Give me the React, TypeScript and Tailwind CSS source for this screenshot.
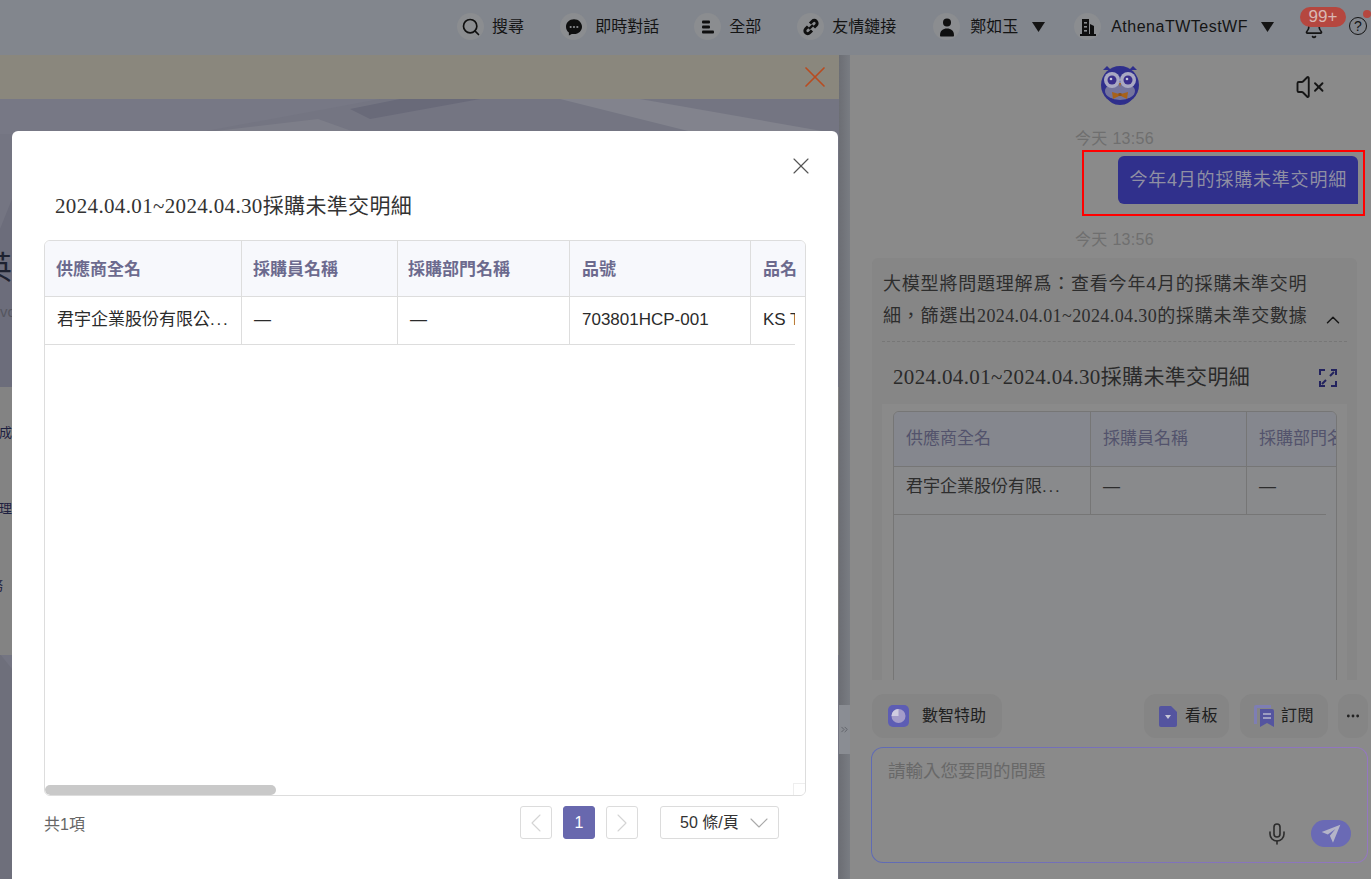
import React from "react";
import { Search, X, ChevronUp, ChevronDown, ChevronLeft, ChevronRight, ChevronsRight, VolumeX, Mic, Bell, Ellipsis } from "lucide-react";

const cjk = "font-['Liberation_Sans','Noto_Sans_CJK_TC',sans-serif]";
const serif = "font-['Liberation_Serif','Noto_Sans_CJK_TC',serif]";

function Circle({ children }: { children: React.ReactNode }) {
  return <span className="flex h-[27px] w-[27px] items-center justify-center rounded-full bg-[#8b8d90] text-[#0f0f0f]">{children}</span>;
}

function NavItem({ icon, label, gap = "gap-[8px]", cls = "" }: { icon: React.ReactNode; label: string; gap?: string; cls?: string }) {
  return (
    <div className={`flex items-center ${gap} ${cls}`}>
      <Circle>{icon}</Circle>
      <span className="text-[16px] leading-none text-[#141414]">{label}</span>
    </div>
  );
}

function Caret() {
  return (
    <svg width="13" height="10" viewBox="0 0 13 10"><path d="M0 0h13L6.5 10Z" fill="#141414" /></svg>
  );
}

function Owl() {
  return (
    <svg width="42" height="42" viewBox="0 0 42 42">
      <path d="M4 6 L8 2 L12 6 Z M38 6 L34 2 L30 6 Z" fill="#2f2f8c" />
      <circle cx="21" cy="21" r="19" fill="#2f2f8c" />
      <ellipse cx="21" cy="27" rx="15" ry="9" fill="#74749c" />
      <path d="M9 33 Q21 42 33 33 Q31 41 21 41 Q11 41 9 33Z" fill="#2f2f8c" />
      <circle cx="13" cy="16" r="8" fill="#a9a9c2" />
      <circle cx="29" cy="16" r="8" fill="#a9a9c2" />
      <circle cx="13" cy="16" r="4.5" fill="#3a2f8c" />
      <circle cx="29" cy="16" r="4.5" fill="#3a2f8c" />
      <circle cx="12" cy="15" r="1.3" fill="#c7c7dd" />
      <circle cx="28" cy="15" r="1.3" fill="#c7c7dd" />
      <path d="M20 19 L22 19 L21 23 Z" fill="#a8661c" />
      <path d="M13 28 L20 30 L20 32 L14 35 Z M29 28 L22 30 L22 32 L28 35 Z" fill="#a8621a" />
      <rect x="19.5" y="29" width="3" height="3" fill="#8f5216" />
    </svg>
  );
}

function Cell({ w, head, children, last, pad = "pl-[12px]", shift = "" }: { w: string; head?: boolean; children: React.ReactNode; last?: boolean; pad?: string; shift?: string }) {
  return (
    <div className={`${w} ${pad} ${shift} flex shrink-0 items-center overflow-hidden whitespace-nowrap ${last ? "" : "border-r"} ${head ? "font-bold" : ""} border-inherit`}>
      {children}
    </div>
  );
}

function Pager({ children, active }: { children: React.ReactNode; active?: boolean }) {
  return (
    <div className={`flex h-[33px] w-[32px] items-center justify-center overflow-hidden rounded-[3px] border text-[16px] ${active ? "border-[#6868ae] bg-[#6868ae] text-white" : "border-[#dcdcdc] text-[#d4d4d4]"}`}>
      {children}
    </div>
  );
}

function DotsIcon() {
  return (
    <svg width="20" height="20" viewBox="0 0 18 18"><path d="M9 2C4.8 2 1.8 5 1.8 8.8c0 2.2 1 4 2.6 5.2v2.6l2.6-1.4c.6.2 1.3.2 2 .2 4.2 0 7.2-3 7.2-6.6S13.2 2 9 2Z" fill="#0f0f0f" /><circle cx="6" cy="9" r="1" fill="#8b8d90" /><circle cx="9" cy="9" r="1" fill="#8b8d90" /><circle cx="12" cy="9" r="1" fill="#8b8d90" /></svg>
  );
}
function BarsIcon() {
  return (
    <svg width="18" height="18" viewBox="0 0 18 18" fill="#0f0f0f"><rect x="3" y="2.5" width="8" height="3" rx="1" /><rect x="3" y="7.5" width="8" height="3" rx="1" /><rect x="3" y="12.5" width="12" height="3" rx="1" /></svg>
  );
}
function LinkIcon() {
  return (
    <svg width="18" height="18" viewBox="0 0 18 18" fill="none" stroke="#0f0f0f" strokeWidth="3"><path d="M8 5.5 10.3 3.2a2.8 2.8 0 0 1 4 4L12 9.5" /><path d="M10 12.5 7.7 14.8a2.8 2.8 0 0 1-4-4L6 8.5" /><path d="M7 11l4-4" strokeWidth="2.4" /></svg>
  );
}
function UserIcon() {
  return (
    <svg width="18" height="20" viewBox="0 0 18 20" fill="#0f0f0f"><circle cx="9" cy="5.5" r="4" /><path d="M2 18.5c0-5 3-7 7-7s7 2 7 7c0 .5-.4 1-1 1H3c-.6 0-1-.5-1-1Z" /></svg>
  );
}
function BuildingIcon() {
  return (
    <svg width="18" height="20" viewBox="0 0 18 20" fill="#0f0f0f"><path d="M3 2h7v16H3zM11 7l4 2v9h-4z" /><rect x="1" y="17" width="16" height="2" /><rect x="5" y="5" width="3" height="1.6" fill="#8b8d90" /><rect x="5" y="9" width="3" height="1.6" fill="#8b8d90" /><rect x="5" y="13" width="3" height="1.6" fill="#8b8d90" /></svg>
  );
}

function Hero() {
  return (
    <svg className="absolute inset-0 h-full w-full" viewBox="0 0 839 780" preserveAspectRatio="none">
      <rect width="839" height="780" fill="#747582" />
      <polygon points="0,0 380,0 190,35 0,35" fill="#777885" />
      <polygon points="190,35 318,20 360,35" fill="#7d7e89" />
      <polygon points="350,10 400,0 480,0 370,20" fill="#696a79" />
      <polygon points="560,0 640,0 839,35 700,35" fill="#82838d" />
      <polygon points="0,130 12,100 12,288 0,288" fill="#6c6d7b" />
      <polygon points="0,555 12,570 12,780 0,780" fill="#6e6f7b" />
    </svg>
  );
}

export default function App() {
  return (
    <div className={`relative flex h-[879px] w-[1371px] flex-col overflow-hidden bg-[#82868d] ${cjk}`}>
      <header className="flex h-[55px] shrink-0 items-center justify-end gap-[35px] bg-[#82868d] pb-[2px] pr-[4px]">
        <NavItem cls="mr-[1px]" icon={<Search size={20} strokeWidth={2} />} label="搜尋" />
        <NavItem icon={<DotsIcon />} label="即時對話" />
        <NavItem cls="mr-[1px]" icon={<BarsIcon />} label="全部" />
        <NavItem icon={<LinkIcon />} label="友情鏈接" />
        <div className="ml-[2px] flex items-center gap-[14px]">
          <NavItem icon={<UserIcon />} label="鄭如玉" gap="gap-[10px]" />
          <Caret />
        </div>
        <div className="ml-[-6px] flex items-center gap-[13px]">
          <div className="flex items-center gap-[10px]">
            <Circle><BuildingIcon /></Circle>
            <span className="text-[16px] leading-none tracking-[0.5px] text-[#141414]">AthenaTWTestWF</span>
          </div>
          <Caret />
        </div>
        <div className="relative ml-[-5px] flex items-center gap-[25px]">
          <Bell size={20} className="mt-[4px] text-[#141414]" />
          <span className="mt-[-2px] flex h-[18px] w-[18px] items-center justify-center rounded-full border border-[#141414] text-[14px] leading-none text-[#141414]">?</span>
          <span className="absolute left-[-4px] top-[-8px] flex h-[20px] w-[46px] items-center justify-center rounded-[10px] bg-[#b5473f] text-[17px] leading-none text-[#d9b7b3]">99+</span>
          <span className="absolute right-[-4px] top-[-5px] h-[8px] w-[8px] rounded-full bg-[#b5473f]" />
        </div>
      </header>

      <main className="flex min-h-0 flex-1">
        <section className="relative flex w-[839px] shrink-0 flex-col overflow-hidden">
          <div className="relative flex h-[44px] shrink-0 items-center justify-end bg-[#8a877d] pr-[6px]">
            <X size={36} strokeWidth={1.1} className="text-[#b84c20]" />
          </div>
          <div className="relative min-h-0 flex-1">
            <Hero />
            <div className="relative flex h-full flex-col">
              <div className="h-[288px] shrink-0 pt-[150px]">
                <div className="ml-[-20px] text-[32px] leading-[38px] text-[#1e2230]">英</div>
                <div className="mt-[17px] text-[15px] leading-[16px] text-[#55565f]">vo</div>
              </div>
              <div className="flex h-[268px] shrink-0 flex-col bg-[#838383] pt-[38px] text-[13px] leading-[16px] text-[#1d2040]">
                <div className="ml-[-14px] whitespace-nowrap">完成</div>
                <div className="ml-[-14px] mt-[60px] whitespace-nowrap">處理</div>
                <div className="ml-[-10px] mt-[61px] whitespace-nowrap">務</div>
              </div>
            </div>
          </div>

          <div className="absolute left-[12px] top-[76px] h-[760px] w-[826px] rounded-[6px] bg-white">
            <div className="flex h-[70px] justify-end pr-[23px] pt-[21px]">
              <X size={28} strokeWidth={1} className="text-[#555]" />
            </div>
            <h2 className={`pl-[43px] text-[21px] font-normal leading-[10px] tracking-[0.35px] text-[#333] ${serif}`}>2024.04.01~2024.04.30採購未準交明細</h2>
            <div className="relative mx-[32px] mt-[29px] h-[556px] w-[762px] overflow-hidden rounded-[6px] border border-[#dddddd]">
              <div className="flex h-[56px] w-[900px] border-b border-[#dddddd] bg-[#f7f8fc] text-[17px] text-[#6c6a8e]">
                <Cell w="w-[197px]" head pad="pl-[11px]" shift="pt-[2px]">供應商全名</Cell>
                <Cell w="w-[156px]" head pad="pl-[11px]" shift="pt-[2px]">採購員名稱</Cell>
                <Cell w="w-[172px]" head pad="pl-[10px]" shift="pt-[2px]">採購部門名稱</Cell>
                <Cell w="w-[181px]" head shift="pt-[2px]">品號</Cell>
                <Cell w="w-[120px]" head last shift="pt-[2px]">品名</Cell>
              </div>
              <div className="w-[750px] overflow-hidden border-b border-[#dddddd]">
                <div className="flex h-[47px] w-[900px] border-[#dddddd] text-[17px] text-[#2b2b2b]">
                  <Cell w="w-[197px]" shift="pb-[2px]"><span>君宇企業股份有限公<span className="tracking-[1.8px]">...</span></span></Cell>
                  <Cell w="w-[156px]" shift="pb-[2px]">—</Cell>
                  <Cell w="w-[172px]" shift="pb-[2px]">—</Cell>
                  <Cell w="w-[181px]" shift="pb-[2px]">703801HCP-001</Cell>
                  <Cell w="w-[120px]" last shift="pb-[2px]">KS T</Cell>
                </div>
              </div>
              <div className="absolute bottom-0 left-0 h-[10px] w-[231px] rounded-[5px] bg-[#c9c9c9]" />
              <div className="absolute bottom-0 right-0 h-[12px] w-[12px] border-l border-t border-[#eeeeee] bg-white" />
            </div>
            <div className="mx-[32px] mt-[10px] flex w-[735px] items-center text-[16px]">
              <span className="pt-[5px] text-[#666]">共1項</span>
              <div className="ml-auto flex items-center gap-[11px]">
                <Pager><ChevronLeft size={32} strokeWidth={0.8} className="shrink-0" /></Pager>
                <Pager active>1</Pager>
                <Pager><ChevronRight size={32} strokeWidth={0.8} className="shrink-0" /></Pager>
              </div>
              <div className="ml-[22px] flex h-[33px] w-[119px] items-center justify-between overflow-hidden rounded-[3px] border border-[#dcdcdc] pl-[19px] pr-[3px] text-[#333]">
                <span>50 條/頁</span>
                <ChevronDown size={32} strokeWidth={0.8} className="shrink-0 text-[#aaa]" />
              </div>
            </div>
          </div>
        </section>

        <div className="relative w-[11px] shrink-0 bg-gradient-to-r from-[#6c6e74] to-[#797c82]">
          <div className="absolute left-0 top-[650px] flex h-[49px] w-[11px] items-center bg-[#8a8d93] text-[#5e6068]">
            <ChevronsRight size={11} strokeWidth={2} className="shrink-0" />
          </div>
        </div>

        <section className="flex min-w-0 flex-1 flex-col bg-[#8a8a8a]">
          <div className="flex h-[74px] shrink-0 items-start justify-between pl-[249px] pr-[46px] pt-[9px]">
            <Owl />
            <VolumeX size={30} strokeWidth={1.5} className="mt-[8px] text-[#161616]" />
          </div>
          <div className="min-h-0 flex-1 overflow-hidden">
            <div className="mr-[7px] pr-[49px] text-center text-[16px] leading-[20px] tracking-[0.3px] text-[#6f6f6f]">
              <span className="ml-[64px]">今天 13:56</span>
            </div>
            <div className="relative mt-[7px] flex h-[48px] justify-end pr-[13px]">
              <div className="flex items-center rounded-l-[6px] rounded-tr-[6px] bg-[#30308c] px-[11px] text-[18px] tracking-[0.8px] text-[#8f8fa3]">今年4月的採購未準交明細</div>
              <div className="absolute left-[232px] right-[6px] top-[-6px] h-[66px] border-[2px] border-[#ff0000]" />
            </div>
            <div className="mr-[7px] mt-[26px] pr-[49px] text-center text-[16px] leading-[20px] tracking-[0.3px] text-[#6f6f6f]">
              <span className="ml-[64px]">今天 13:56</span>
            </div>
            <div className="ml-[22px] mr-[14px] mt-[8px] h-[500px] rounded-[6px] bg-[#868686] px-[10px] pt-[10px]">
              <div className="relative border-b border-dashed border-[#777] pb-[9px] pl-[1px] text-[18px] leading-[32px] tracking-[0.8px] text-[#2d2d2d]">
                <div className="whitespace-nowrap">大模型將問題理解爲：查看今年4月的採購未準交明</div>
                <div className="whitespace-nowrap">細，篩選出<span className={`${serif} tracking-[0.4px]`}>2024.04.01~2024.04.30</span>的採購未準交數據</div>
                <ChevronUp size={22} strokeWidth={1.6} className="absolute right-[3px] top-[41px] text-[#161616]" />
              </div>
              <div className="flex h-[62px] items-center justify-between pl-[11px] pr-[10px] pt-[10px]">
                <span className={`${serif} whitespace-nowrap text-[21px] tracking-[0.35px] text-[#2a2a2a]`}>2024.04.01~2024.04.30採購未準交明細</span>
                <svg width="18" height="18" viewBox="0 0 18 18" fill="none" stroke="#23235e" strokeWidth="2"><path d="M1 6V1h5M12 1h5v5M17 12v5h-5M6 17H1v-5M3 15l4-4M15 3l-4 4" /></svg>
              </div>
              <div className="h-[400px] bg-[#8a8a8a] pl-[11px] pr-[10px] pt-[7px]">
                <div className="h-[300px] overflow-hidden rounded-t-[6px] border border-[#767676] bg-[#898a8c]">
                  <div className="flex h-[55px] w-[600px] border-b border-[#767676] bg-[#85878e] text-[17px] text-[#53536c]">
                    <Cell w="w-[197px]">供應商全名</Cell>
                    <Cell w="w-[156px]">採購員名稱</Cell>
                    <Cell w="w-[172px]" last>採購部門名稱</Cell>
                  </div>
                  <div className="w-[432px] overflow-hidden border-b border-[#767676]">
                    <div className="flex h-[47px] w-[600px] border-[#767676] text-[17px] text-[#2d2d2d]">
                      <Cell w="w-[197px]" shift="pb-[7px]"><span>君宇企業股份有限<span className="tracking-[1.8px]">...</span></span></Cell>
                      <Cell w="w-[156px]" shift="pb-[7px]">—</Cell>
                      <Cell w="w-[172px]" last shift="pb-[7px]">—</Cell>
                    </div>
                  </div>
                </div>
              </div>
            </div>
          </div>

          <div className="mt-[14px] flex h-[44px] shrink-0 items-center pl-[22px] pr-[3px] text-[16px] text-[#202020]">
            <div className="flex h-full w-[130px] items-center gap-[13px] rounded-[12px] bg-[#858585] pl-[16px]">
              <svg width="21" height="22" viewBox="0 0 21 22"><rect width="21" height="22" rx="5" fill="#5d5db4" /><circle cx="10.5" cy="11" r="7" fill="#a49cc9" /><path d="M10.5 4a7 7 0 0 0-7 7h7Z" fill="#d0cce0" /></svg>
              <span>數智特助</span>
            </div>
            <div className="ml-auto flex h-full w-[85px] items-center gap-[8px] rounded-[12px] bg-[#858585] pl-[15px]">
              <svg width="18" height="21" viewBox="0 0 18 21"><path d="M2 0h10l6 6v13a2 2 0 0 1-2 2H2a2 2 0 0 1-2-2V2a2 2 0 0 1 2-2Z" fill="#54549f" /><path d="M6 9h6l-3 4Z" fill="#c8c8d8" /></svg>
              <span className="tracking-[0.5px]">看板</span>
            </div>
            <div className="ml-[11px] flex h-full w-[88px] items-center gap-[7px] rounded-[12px] bg-[#858585] pl-[14px]">
              <svg width="20" height="22" viewBox="0 0 20 22"><path d="M2 0h15v3H3v16H0V2a2 2 0 0 1 2-2Z" fill="#7e7eb4" /><path d="M6 4h12a2 2 0 0 1 2 2v16l-7-4-7 4V4Z" fill="#54549f" /><path d="M9 9h8M9 13h8" stroke="#b5b5cd" strokeWidth="1.5" /></svg>
              <span className="tracking-[0.5px]">訂閱</span>
            </div>
            <div className="ml-[10px] flex h-full w-[30px] items-center justify-center rounded-[12px] bg-[#858585]">
              <Ellipsis size={16} strokeWidth={2.2} className="text-[#222]" />
            </div>
          </div>

          <div className="mb-[16px] ml-[21px] mr-[3px] mt-[9px] h-[116px] shrink-0 rounded-[12px] bg-gradient-to-r from-[#5f6bb4] to-[#9477c0] p-[1px]">
            <div className="flex h-full flex-col rounded-[11px] bg-[#8a8a8a] px-[16px] pt-[11px]">
              <div className="text-[17.5px] leading-[24px] text-[#686868]">請輸入您要問的問題</div>
              <div className="mb-[15px] mt-auto flex items-center justify-end gap-[22px]">
                <Mic size={24} strokeWidth={1.6} className="text-[#2c2c2c]" />
                <div className="flex h-[27px] w-[40px] items-center justify-center rounded-[14px] bg-[#6a6ab5]">
                  <svg width="22" height="22" viewBox="0 0 20 20"><path d="M18.5 1.5 1.5 8.2l5.6 2.2L14 5.5l-5 6.2 2.8 6.2Z" fill="#b4b4c8" /></svg>
                </div>
              </div>
            </div>
          </div>
        </section>
      </main>
    </div>
  );
}
